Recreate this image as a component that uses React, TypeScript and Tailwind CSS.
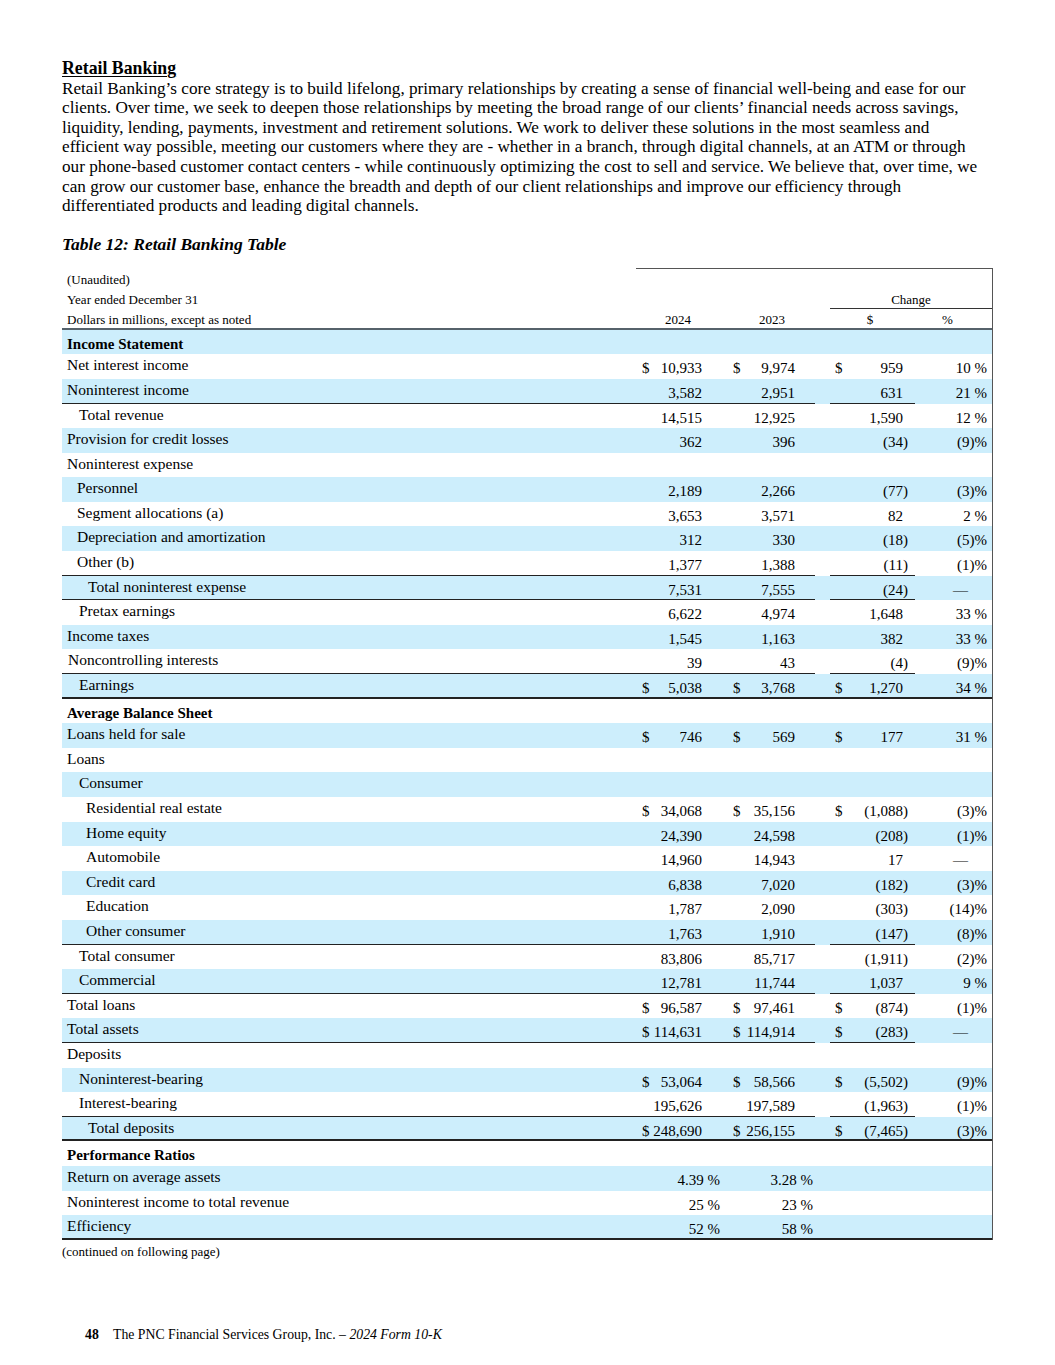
type Cell = [string, string] | undefined;

type Row = {
  label: string;
  pad: string;
  head?: boolean;
  a?: Cell;
  b?: Cell;
  c?: Cell;
  d?: string;
  line?: "single" | "thick";
  ratio?: boolean;
};

const income: Row[] = [
  { label: "Income Statement", pad: "pl-[5px]", head: true },
  { label: "Net interest income", pad: "pl-[5px]", a: ["$", "10,933"], b: ["$", "9,974"], c: ["$", "959"], d: "10 %" },
  { label: "Noninterest income", pad: "pl-[5px]", a: ["", "3,582"], b: ["", "2,951"], c: ["", "631"], d: "21 %", line: "single" },
  { label: "Total revenue", pad: "pl-[17px]", a: ["", "14,515"], b: ["", "12,925"], c: ["", "1,590"], d: "12 %" },
  { label: "Provision for credit losses", pad: "pl-[5px]", a: ["", "362"], b: ["", "396"], c: ["", "(34)"], d: "(9)%" },
  { label: "Noninterest expense", pad: "pl-[5px]" },
  { label: "Personnel", pad: "pl-[15px]", a: ["", "2,189"], b: ["", "2,266"], c: ["", "(77)"], d: "(3)%" },
  { label: "Segment allocations (a)", pad: "pl-[15px]", a: ["", "3,653"], b: ["", "3,571"], c: ["", "82"], d: "2 %" },
  { label: "Depreciation and amortization", pad: "pl-[15px]", a: ["", "312"], b: ["", "330"], c: ["", "(18)"], d: "(5)%" },
  { label: "Other (b)", pad: "pl-[15px]", a: ["", "1,377"], b: ["", "1,388"], c: ["", "(11)"], d: "(1)%", line: "single" },
  { label: "Total noninterest expense", pad: "pl-[26px]", a: ["", "7,531"], b: ["", "7,555"], c: ["", "(24)"], d: "—", line: "single" },
  { label: "Pretax earnings", pad: "pl-[17px]", a: ["", "6,622"], b: ["", "4,974"], c: ["", "1,648"], d: "33 %" },
  { label: "Income taxes", pad: "pl-[5px]", a: ["", "1,545"], b: ["", "1,163"], c: ["", "382"], d: "33 %" },
  { label: "Noncontrolling interests", pad: "pl-[6px]", a: ["", "39"], b: ["", "43"], c: ["", "(4)"], d: "(9)%", line: "single" },
  { label: "Earnings", pad: "pl-[17px]", a: ["$", "5,038"], b: ["$", "3,768"], c: ["$", "1,270"], d: "34 %", line: "thick" },
];

const balance: Row[] = [
  { label: "Average Balance Sheet", pad: "pl-[5px]", head: true },
  { label: "Loans held for sale", pad: "pl-[5px]", a: ["$", "746"], b: ["$", "569"], c: ["$", "177"], d: "31 %" },
  { label: "Loans", pad: "pl-[5px]" },
  { label: "Consumer", pad: "pl-[17px]" },
  { label: "Residential real estate", pad: "pl-[24px]", a: ["$", "34,068"], b: ["$", "35,156"], c: ["$", "(1,088)"], d: "(3)%" },
  { label: "Home equity", pad: "pl-[24px]", a: ["", "24,390"], b: ["", "24,598"], c: ["", "(208)"], d: "(1)%" },
  { label: "Automobile", pad: "pl-[24px]", a: ["", "14,960"], b: ["", "14,943"], c: ["", "17"], d: "—" },
  { label: "Credit card", pad: "pl-[24px]", a: ["", "6,838"], b: ["", "7,020"], c: ["", "(182)"], d: "(3)%" },
  { label: "Education", pad: "pl-[24px]", a: ["", "1,787"], b: ["", "2,090"], c: ["", "(303)"], d: "(14)%" },
  { label: "Other consumer", pad: "pl-[24px]", a: ["", "1,763"], b: ["", "1,910"], c: ["", "(147)"], d: "(8)%", line: "single" },
  { label: "Total consumer", pad: "pl-[17px]", a: ["", "83,806"], b: ["", "85,717"], c: ["", "(1,911)"], d: "(2)%" },
  { label: "Commercial", pad: "pl-[17px]", a: ["", "12,781"], b: ["", "11,744"], c: ["", "1,037"], d: "9 %", line: "single" },
  { label: "Total loans", pad: "pl-[5px]", a: ["$", "96,587"], b: ["$", "97,461"], c: ["$", "(874)"], d: "(1)%" },
  { label: "Total assets", pad: "pl-[5px]", a: ["$", "114,631"], b: ["$", "114,914"], c: ["$", "(283)"], d: "—", line: "single" },
  { label: "Deposits", pad: "pl-[5px]" },
  { label: "Noninterest-bearing", pad: "pl-[17px]", a: ["$", "53,064"], b: ["$", "58,566"], c: ["$", "(5,502)"], d: "(9)%" },
  { label: "Interest-bearing", pad: "pl-[17px]", a: ["", "195,626"], b: ["", "197,589"], c: ["", "(1,963)"], d: "(1)%", line: "single" },
  { label: "Total deposits", pad: "pl-[26px]", a: ["$", "248,690"], b: ["$", "256,155"], c: ["$", "(7,465)"], d: "(3)%", line: "thick" },
];

const ratios: Row[] = [
  { label: "Performance Ratios", pad: "pl-[5px]", head: true },
  { label: "Return on average assets", pad: "pl-[5px]", a: ["", "4.39 %"], b: ["", "3.28 %"], ratio: true },
  { label: "Noninterest income to total revenue", pad: "pl-[5px]", a: ["", "25 %"], b: ["", "23 %"], ratio: true },
  { label: "Efficiency", pad: "pl-[5px]", a: ["", "52 %"], b: ["", "58 %"], ratio: true, line: "thick" },
];

const paragraph = [
  "Retail Banking’s core strategy is to build lifelong, primary relationships by creating a sense of financial well-being and ease for our",
  "clients. Over time, we seek to deepen those relationships by meeting the broad range of our clients’ financial needs across savings,",
  "liquidity, lending, payments, investment and retirement solutions. We work to deliver these solutions in the most seamless and",
  "efficient way possible, meeting our customers where they are - whether in a branch, through digital channels, at an ATM or through",
  "our phone-based customer contact centers - while continuously optimizing the cost to sell and service. We believe that, over time, we",
  "can grow our customer base, enhance the breadth and depth of our client relationships and improve our efficiency through",
  "differentiated products and leading digital channels.",
];

function Num({ cell, pl, pr }: { cell: Cell; pl: string; pr: string }) {
  if (!cell) return null;
  return (
    <div className={`flex justify-between pt-[5px] text-[15px] leading-[18px] ${pl} ${pr}`}>
      <span>{cell[0]}</span>
      <span>{cell[1]}</span>
    </div>
  );
}

function TableRow({ row, blue }: { row: Row; blue: boolean }) {
  const single = row.line === "single" ? "border-b border-[#222]" : "";
  const thick = row.line === "thick" ? "border-b-2 border-[#222]" : "";
  const paren = row.c && row.c[1].startsWith("(");
  const dash = row.d === "—";
  return (
    <div className={`flex h-[24.6px] ${blue ? "bg-[#cdeefc]" : ""} ${thick}`}>
      <div className={`w-[570px] shrink-0 ${single} ${row.pad}`}>
        {row.head ? (
          <div className="pt-[5px] text-[15px] font-bold leading-[18px]">{row.label}</div>
        ) : (
          <div className="pt-[2px] text-[15.5px] leading-[18px]">{row.label}</div>
        )}
      </div>
      <div className={`w-[92px] shrink-0 ${single}`}>
        <Num cell={row.a} pl="pl-[10px]" pr={row.ratio ? "pr-[4px]" : "pr-[22px]"} />
      </div>
      <div className={`w-[91px] shrink-0 ${single}`}>
        <Num cell={row.b} pl="pl-[9px]" pr={row.ratio ? "pr-[2px]" : "pr-[20px]"} />
      </div>
      <div className="w-[15px] shrink-0" />
      <div className={`w-[85px] shrink-0 ${single}`}>
        <Num cell={row.c} pl="pl-[5px]" pr={paren ? "pr-[7px]" : "pr-[12px]"} />
      </div>
      <div className={`flex-1 pt-[5px] text-right text-[15px] leading-[18px] ${dash ? "pr-[24px]" : "pr-[5px]"}`}>
        {row.d}
      </div>
    </div>
  );
}

function Section({ rows, firstBlue }: { rows: Row[]; firstBlue: boolean }) {
  return (
    <>
      {rows.map((r, i) => (
        <TableRow key={r.label} row={r} blue={i % 2 === 0 ? firstBlue : !firstBlue} />
      ))}
    </>
  );
}

export default function App() {
  return (
    <div className="h-[1365px] w-[1055px] bg-white pl-[62px] pt-[59px] font-['Liberation_Serif','Times_New_Roman',serif] text-black">
      {/* Section heading + intro */}
      <div className="w-[960px] text-[17.2px] leading-[19.6px]">
        <div className="text-[17.8px] font-bold underline decoration-1 underline-offset-2">Retail Banking</div>
        {paragraph.map((l) => (
          <div key={l} className="whitespace-nowrap">
            {l}
          </div>
        ))}
        <div className="mt-[19.6px] text-[17.5px] font-bold italic">Table 12: Retail Banking Table</div>
      </div>

      {/* Table */}
      <div className="mt-[13px] w-[931px] border-r-[1.5px] border-[#555]">
        <div className="flex h-[20.6px]">
          <div className="w-[574px] shrink-0 pl-[5px] pt-[4px] text-[13px] leading-[16px]">(Unaudited)</div>
          <div className="flex-1 border-t-[1.5px] border-[#555]" />
        </div>
        <div className="flex h-[20.6px] text-[13px] leading-[16px]">
          <div className="w-[570px] shrink-0 pl-[5px] pt-[3px]">Year ended December 31</div>
          <div className="w-[198px] shrink-0" />
          <div className="flex-1 border-b border-[#333] pt-[3px] text-center">Change</div>
        </div>
        <div className="flex h-[20.6px] border-b-2 border-[#56626b] text-[13px] leading-[16px]">
          <div className="w-[570px] shrink-0 pl-[5px] pt-[3px]">Dollars in millions, except as noted</div>
          <div className="w-[92px] shrink-0 pt-[3px] text-center">2024</div>
          <div className="w-[91px] shrink-0 pl-[5px] pt-[3px] text-center">2023</div>
          <div className="w-[15px] shrink-0" />
          <div className="w-[85px] shrink-0 pr-[5px] pt-[3px] text-center">$</div>
          <div className="flex-1 pr-[12px] pt-[3px] text-center">%</div>
        </div>
        <Section rows={income} firstBlue={true} />
        <Section rows={balance} firstBlue={false} />
        <Section rows={ratios} firstBlue={false} />
      </div>
      <div className="mt-[4px] text-[13px] leading-[16px]">(continued on following page)</div>

      {/* Page footer */}
      <div className="mt-[66px] flex items-baseline pl-[23px] text-[13.75px] leading-[18px]">
        <span className="w-[28px] font-bold">48</span>
        <span>
          The PNC Financial Services Group, Inc. – <span className="italic">2024 Form 10-K</span>
        </span>
      </div>
    </div>
  );
}
